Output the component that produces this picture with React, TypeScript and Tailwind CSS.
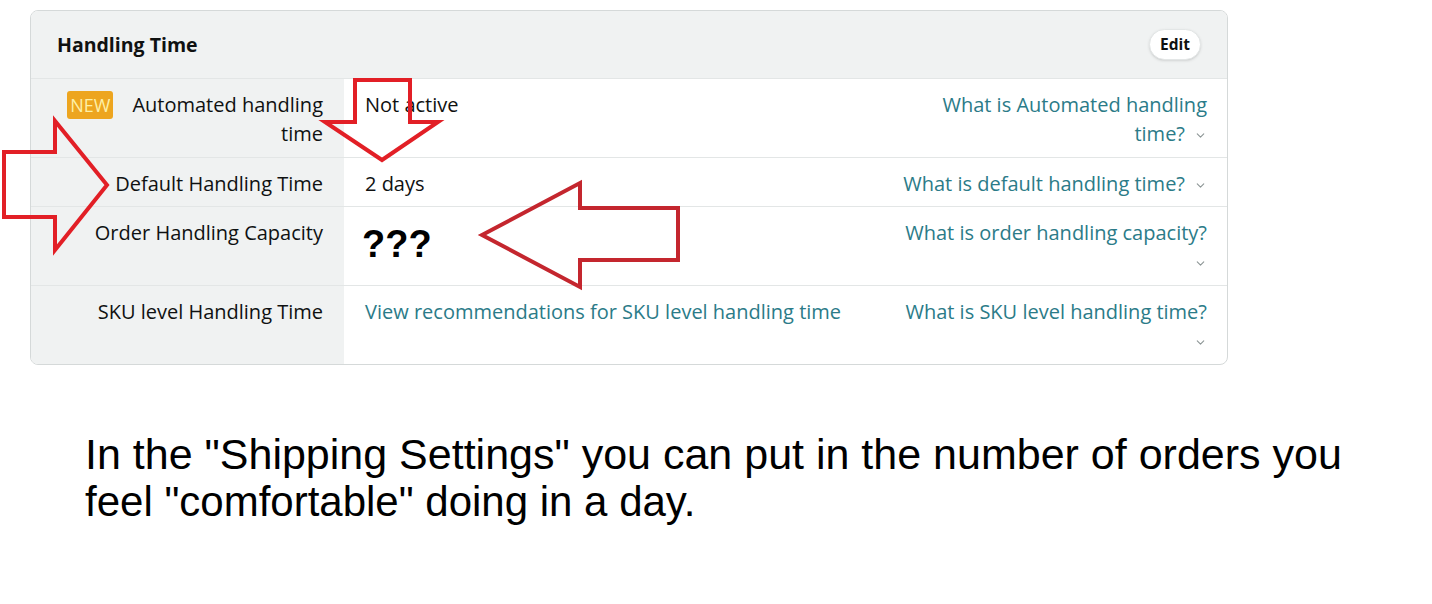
// Handling Time settings card with red annotation arrows and a caption below
import { ChevronDown } from 'lucide-react';
import React from 'react';

const font = { fontFamily: '"Open Sans", "Noto Sans", Arial, sans-serif' };

// Small grey chevron shown after the help links
const Chev: React.FC = () => (
  <ChevronDown className="inline-block w-[13px] h-[13px] text-[#8d9696] ml-[9px] align-middle" strokeWidth={2} />
);

// One row of the card: label on grey, value, help link on the right
const Row: React.FC<{
  label: React.ReactNode;
  value: React.ReactNode;
  help: React.ReactNode;
  valueClass?: string;
  pb?: string;
}> = ({ label, value, help, valueClass, pb = 'pb-[9px]' }) => (
  <div className="flex border-t border-[#e3e6e6]">
    <div className={`w-[313px] shrink-0 bg-[#f0f2f2] text-right pr-[21px] pt-[11px] ${pb}`}>{label}</div>
    <div className={valueClass ?? `flex-1 pl-[21px] pt-[11px] ${pb}`}>{value}</div>
    <div className={`w-[340px] shrink-0 text-right pr-[20px] pt-[11px] ${pb} text-[#2b7b88] whitespace-nowrap`}>
      {help}
    </div>
  </div>
);

const App: React.FC = () => {
  return (
    <div className="relative w-[1432px] h-[604px] bg-white overflow-hidden">
      {/* Karta ustawień */}
      <div
        className="ml-[30px] mt-[10px] w-[1198px] border border-[#d5d9d9] rounded-[8px] overflow-hidden text-[20px] leading-[29px] text-[#0f1111]"
        style={font}
      >
        {/* Nagłówek */}
        <div className="h-[67px] bg-[#f0f2f2] flex items-center justify-between pl-[26px] pr-[26px]">
          <h2 className="font-bold text-[19.5px]">Handling Time</h2>
          <button className="h-[31px] px-[10px] rounded-[16px] bg-white border border-[#e3e6e6] shadow-sm text-[15.5px] font-bold leading-none">
            Edit
          </button>
        </div>

        <Row
          label={
            <div className="flex justify-end items-start">
              <span className="mt-[1px] mr-[19px] px-[3px] h-[28px] leading-[28px] rounded-[3px] bg-[#eda51f] text-[#fdf0a8] text-[18px]">
                NEW
              </span>
              <span>
                Automated handling
                <br />
                time
              </span>
            </div>
          }
          value="Not active"
          help={
            <>
              What is Automated handling
              <br />
              time?
              <Chev />
            </>
          }
        />

        <Row
          label="Default Handling Time"
          value="2 days"
          pb="pb-[8px]"
          help={
            <>
              What is default handling time?
              <Chev />
            </>
          }
        />

        <Row
          label="Order Handling Capacity"
          valueClass="flex-1 pl-[18px] pt-[18px]"
          value={
            <span className="block font-bold text-[38px] leading-[38px] text-black" style={{ fontFamily: '"Liberation Sans", Arial, sans-serif' }}>
              ???
            </span>
          }
          help={
            <>
              What is order handling capacity?
              <br />
              <Chev />
            </>
          }
        />

        <Row
          label="SKU level Handling Time"
          value={<span className="text-[#2b7b88]">View recommendations for SKU level handling time</span>}
          help={
            <>
              What is SKU level handling time?
              <br />
              <Chev />
            </>
          }
        />
      </div>

      {/* Podpis pod kartą */}
      <p
        className="ml-[85px] mt-[66px] text-[43px] leading-[47px] text-black"
        style={{ fontFamily: '"Liberation Sans", Arial, sans-serif' }}
      >
        In the "Shipping Settings" you can put in the number of orders you
        <br />
        <span className="text-[42px]">feel "comfortable" doing in a day.</span>
      </p>

      {/* Czerwone strzałki - adnotacje */}
      <svg className="absolute inset-0 pointer-events-none" width="1432" height="604" viewBox="0 0 1432 604">
        <polygon
          points="355,80 410,80 410,122 438,122 382,160 325,122 355,122"
          fill="none"
          stroke="#e21f26"
          strokeWidth="4"
        />
        <polygon
          points="4,152 55,152 55,121 107,185 55,250 55,217 4,217"
          fill="none"
          stroke="#e21f26"
          strokeWidth="4"
        />
        <polygon
          points="482,235 580,183 580,208 678,208 678,260 580,260 580,287"
          fill="none"
          stroke="#c4262e"
          strokeWidth="4"
        />
      </svg>
    </div>
  );
};

export default App;
